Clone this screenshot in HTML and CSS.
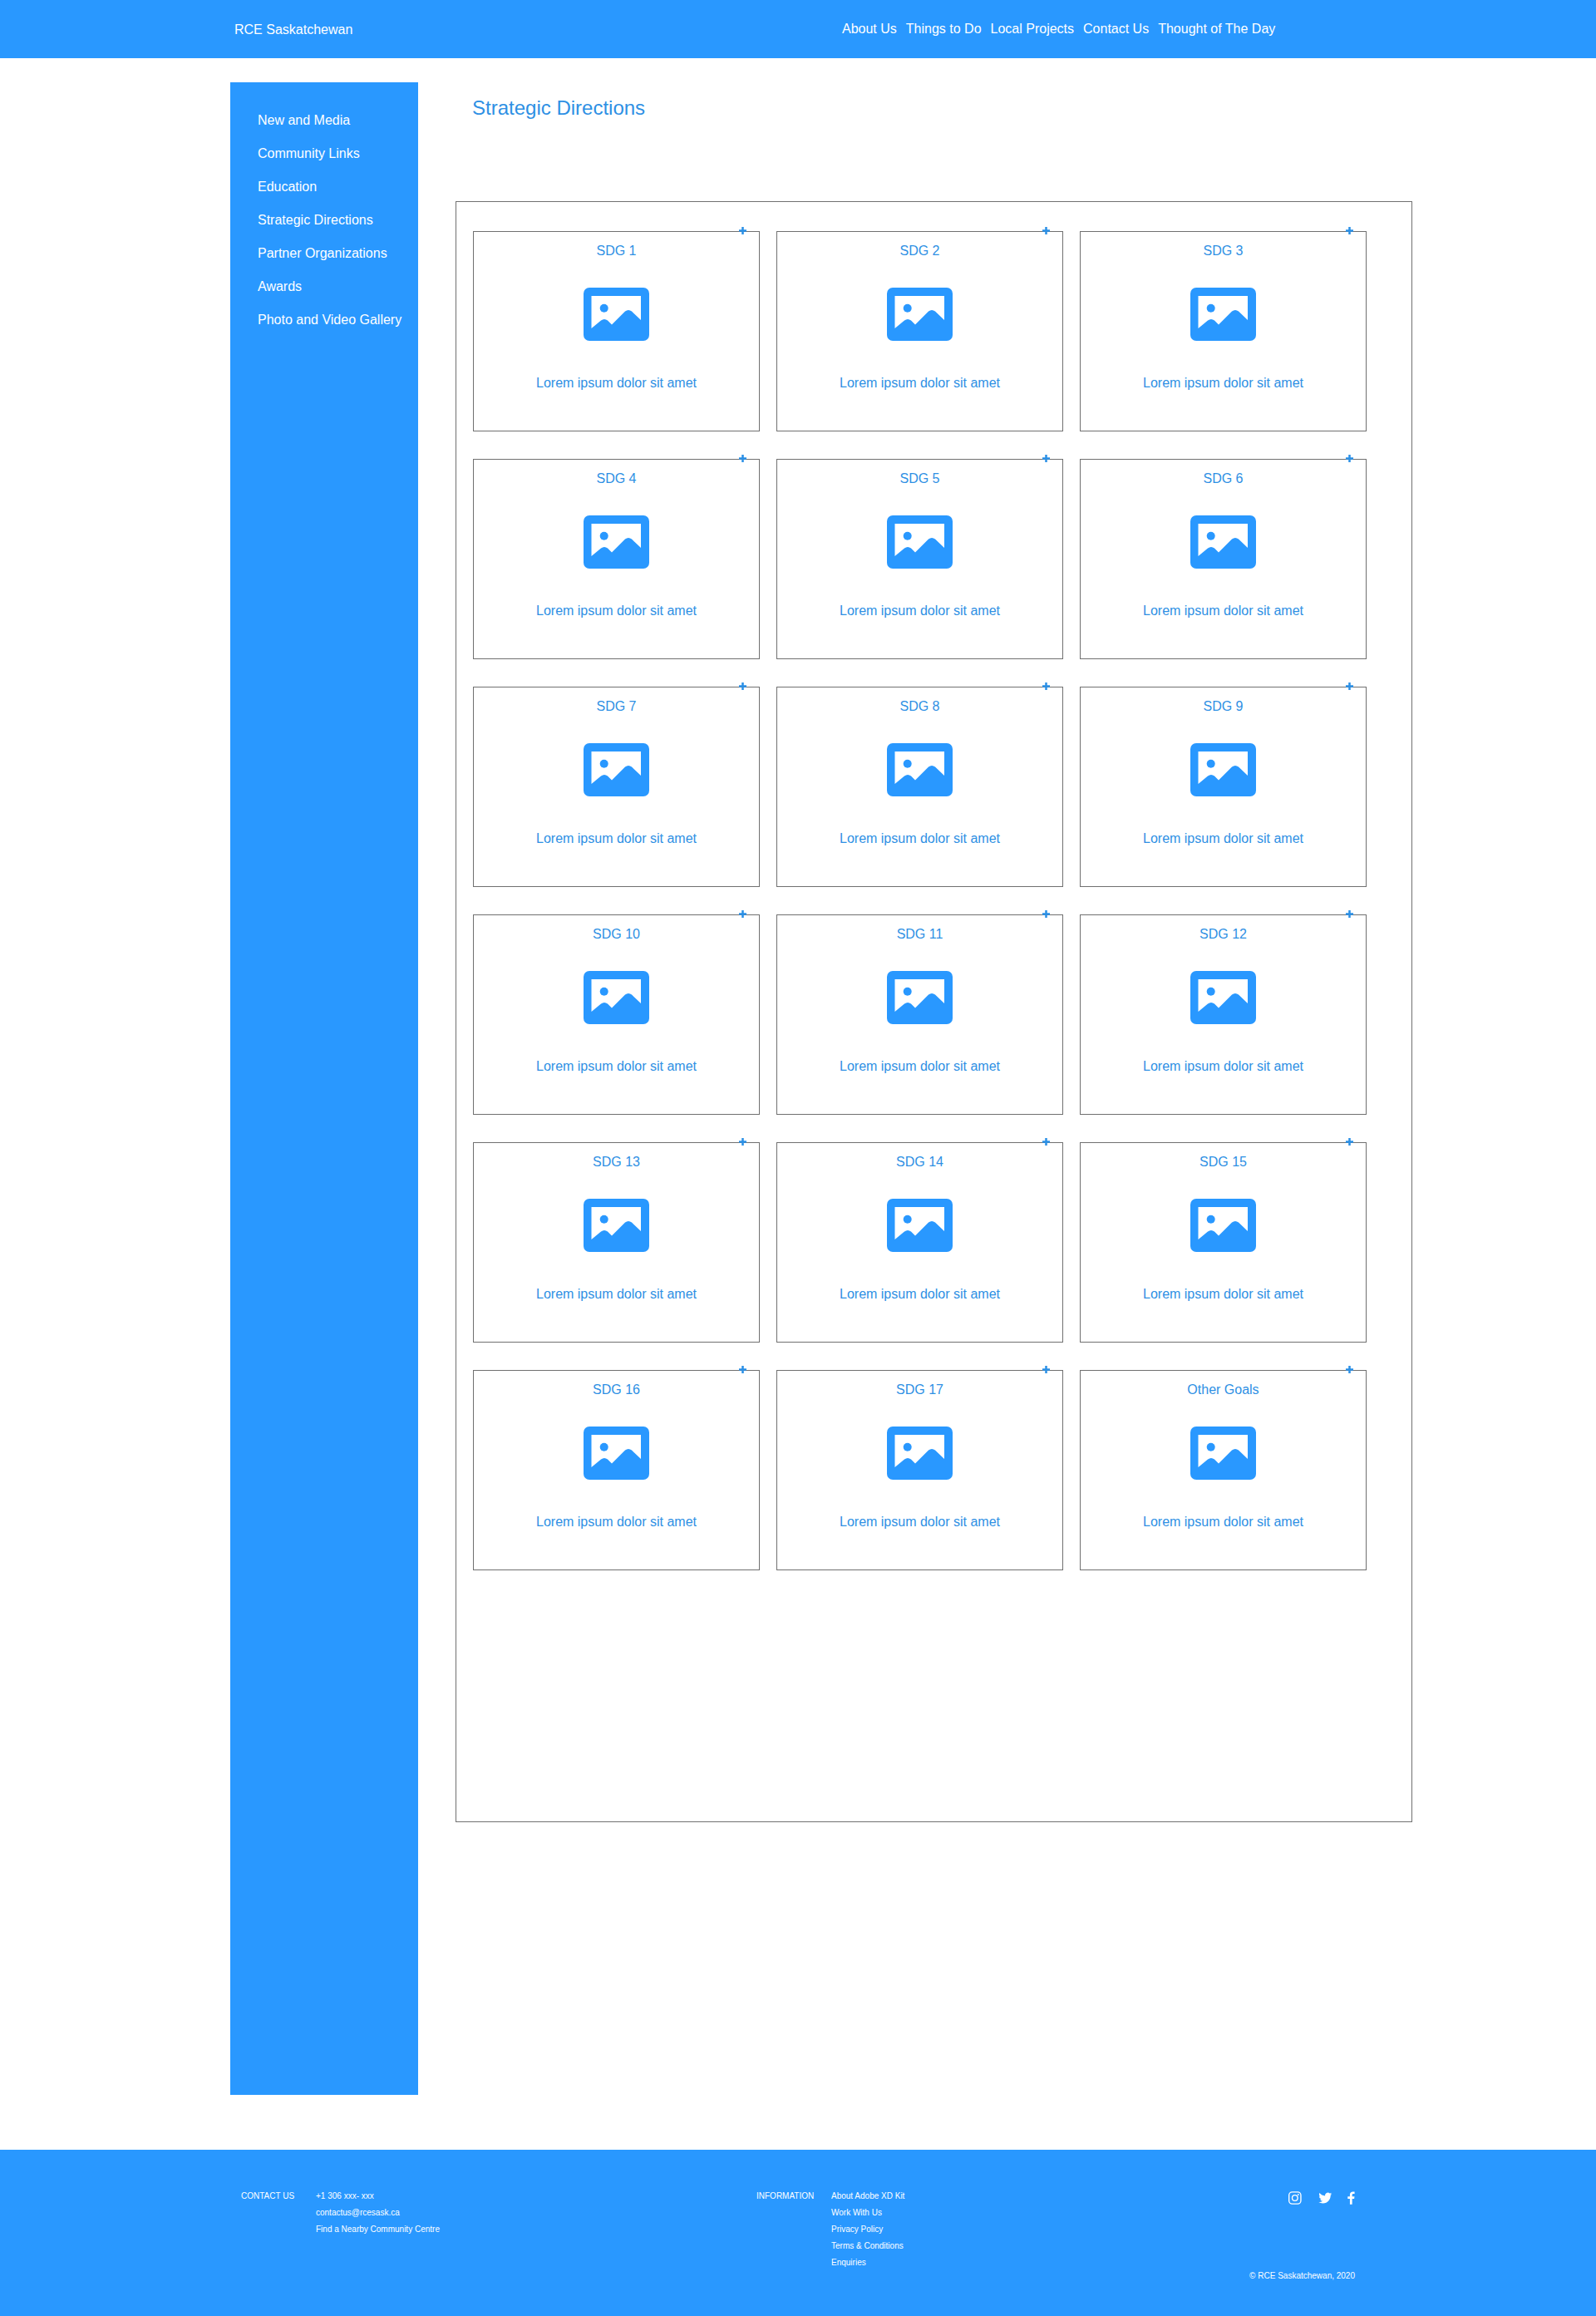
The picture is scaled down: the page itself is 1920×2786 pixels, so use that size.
FILE: index.html
```html
<!DOCTYPE html>
<html lang="en">
<head>
<meta charset="UTF-8" />
<title>RCE Saskatchewan - Strategic Directions</title>
<link rel="stylesheet" href="styles.css">
</head>
<body>
<svg class="icon-defs" aria-hidden="true">
  <symbol id="picture" viewBox="0 0 79 64">
    <rect width="79" height="64" rx="7" fill="#2998ff" />
    <path d="M9.5 10H69V39L58 28.6Q54 25.4 50 28.6L34 44.4L29 39.6Q25 36.6 21 39.6L9.5 49Z" fill="#fff" />
    <circle cx="24.7" cy="24.7" r="5" fill="#2998ff" />
  </symbol>
  <symbol id="plus" viewBox="0 0 10 10">
    <path d="M3.6 0H6.4V3.6H10V6.4H6.4V10H3.6V6.4H0V3.6H3.6Z" fill="#2b90e6" />
  </symbol>
</svg>

<header class="topbar">
  <a class="brand" href="#">RCE Saskatchewan</a>
  <nav class="topnav">
    <a href="#">About Us</a>
    <a href="#">Things to Do</a>
    <a href="#">Local Projects</a>
    <a href="#">Contact Us</a>
    <a href="#">Thought of The Day</a>
  </nav>
</header>

<div class="page">
  <aside class="sidebar">
    <a href="#">New and Media</a>
    <a href="#">Community Links</a>
    <a href="#">Education</a>
    <a href="#">Strategic Directions</a>
    <a href="#">Partner Organizations</a>
    <a href="#">Awards</a>
    <a href="#">Photo and Video Gallery</a>
  </aside>

  <main class="content">
    <h1>Strategic Directions</h1>
    <section class="goals">
      <div class="goal-grid">
        <article class="card"><svg class="plus"><use href="#plus" /></svg><h2>SDG 1</h2><svg class="picture"><use href="#picture" /></svg><p>Lorem ipsum dolor sit amet</p></article>
        <article class="card"><svg class="plus"><use href="#plus" /></svg><h2>SDG 2</h2><svg class="picture"><use href="#picture" /></svg><p>Lorem ipsum dolor sit amet</p></article>
        <article class="card"><svg class="plus"><use href="#plus" /></svg><h2>SDG 3</h2><svg class="picture"><use href="#picture" /></svg><p>Lorem ipsum dolor sit amet</p></article>
        <article class="card"><svg class="plus"><use href="#plus" /></svg><h2>SDG 4</h2><svg class="picture"><use href="#picture" /></svg><p>Lorem ipsum dolor sit amet</p></article>
        <article class="card"><svg class="plus"><use href="#plus" /></svg><h2>SDG 5</h2><svg class="picture"><use href="#picture" /></svg><p>Lorem ipsum dolor sit amet</p></article>
        <article class="card"><svg class="plus"><use href="#plus" /></svg><h2>SDG 6</h2><svg class="picture"><use href="#picture" /></svg><p>Lorem ipsum dolor sit amet</p></article>
        <article class="card"><svg class="plus"><use href="#plus" /></svg><h2>SDG 7</h2><svg class="picture"><use href="#picture" /></svg><p>Lorem ipsum dolor sit amet</p></article>
        <article class="card"><svg class="plus"><use href="#plus" /></svg><h2>SDG 8</h2><svg class="picture"><use href="#picture" /></svg><p>Lorem ipsum dolor sit amet</p></article>
        <article class="card"><svg class="plus"><use href="#plus" /></svg><h2>SDG 9</h2><svg class="picture"><use href="#picture" /></svg><p>Lorem ipsum dolor sit amet</p></article>
        <article class="card"><svg class="plus"><use href="#plus" /></svg><h2>SDG 10</h2><svg class="picture"><use href="#picture" /></svg><p>Lorem ipsum dolor sit amet</p></article>
        <article class="card"><svg class="plus"><use href="#plus" /></svg><h2>SDG 11</h2><svg class="picture"><use href="#picture" /></svg><p>Lorem ipsum dolor sit amet</p></article>
        <article class="card"><svg class="plus"><use href="#plus" /></svg><h2>SDG 12</h2><svg class="picture"><use href="#picture" /></svg><p>Lorem ipsum dolor sit amet</p></article>
        <article class="card"><svg class="plus"><use href="#plus" /></svg><h2>SDG 13</h2><svg class="picture"><use href="#picture" /></svg><p>Lorem ipsum dolor sit amet</p></article>
        <article class="card"><svg class="plus"><use href="#plus" /></svg><h2>SDG 14</h2><svg class="picture"><use href="#picture" /></svg><p>Lorem ipsum dolor sit amet</p></article>
        <article class="card"><svg class="plus"><use href="#plus" /></svg><h2>SDG 15</h2><svg class="picture"><use href="#picture" /></svg><p>Lorem ipsum dolor sit amet</p></article>
        <article class="card"><svg class="plus"><use href="#plus" /></svg><h2>SDG 16</h2><svg class="picture"><use href="#picture" /></svg><p>Lorem ipsum dolor sit amet</p></article>
        <article class="card"><svg class="plus"><use href="#plus" /></svg><h2>SDG 17</h2><svg class="picture"><use href="#picture" /></svg><p>Lorem ipsum dolor sit amet</p></article>
        <article class="card"><svg class="plus"><use href="#plus" /></svg><h2>Other Goals</h2><svg class="picture"><use href="#picture" /></svg><p>Lorem ipsum dolor sit amet</p></article>
      </div>
    </section>
  </main>
</div>

<footer class="footer">
  <div class="foot-group foot-contact">
    <span class="foot-label">CONTACT US</span>
    <div class="foot-links">
      <a href="#">+1 306 xxx- xxx</a>
      <a href="#">contactus@rcesask.ca</a>
      <a href="#">Find a Nearby Community Centre</a>
    </div>
  </div>
  <div class="foot-group foot-info">
    <span class="foot-label">INFORMATION</span>
    <div class="foot-links">
      <a href="#">About Adobe XD Kit</a>
      <a href="#">Work With Us</a>
      <a href="#">Privacy Policy</a>
      <a href="#">Terms &amp; Conditions</a>
      <a href="#">Enquiries</a>
    </div>
  </div>
  <div class="foot-side">
    <div class="social">
      <svg class="insta" viewBox="0 0 16 16" aria-label="Instagram">
        <rect x="0.7" y="0.7" width="14.6" height="14.6" rx="4" fill="none" stroke="#fff" stroke-width="1.4" />
        <circle cx="8" cy="8" r="3.4" fill="none" stroke="#fff" stroke-width="1.4" />
        <circle cx="12.1" cy="3.9" r="0.9" fill="#fff" />
      </svg>
      <svg class="twitter" viewBox="0 0 24 24" aria-label="Twitter">
        <path d="M23.953 4.57a10 10 0 01-2.825.775 4.958 4.958 0 002.163-2.723c-.951.555-2.005.959-3.127 1.184a4.92 4.92 0 00-8.384 4.482C7.69 8.095 4.067 6.13 1.64 3.162a4.822 4.822 0 00-.666 2.475c0 1.71.87 3.213 2.188 4.096a4.904 4.904 0 01-2.228-.616v.06a4.923 4.923 0 003.946 4.827 4.996 4.996 0 01-2.212.085 4.936 4.936 0 004.604 3.417 9.867 9.867 0 01-6.102 2.105c-.39 0-.779-.023-1.17-.067a13.995 13.995 0 007.557 2.209c9.053 0 13.998-7.496 13.998-13.985 0-.21 0-.42-.015-.63A9.935 9.935 0 0024 4.59z" fill="#fff" />
      </svg>
      <svg class="facebook" viewBox="0 0 9 16" aria-label="Facebook">
        <path d="M5.8 16V9H8.3L8.7 6.2H5.8V4.5C5.8 3.6 6.1 3 7.2 3H8.8V.4C8.4.3 7.6.2 6.7.2 4.5.2 3 1.5 3 4V6.2H.3V9H3V16Z" fill="#fff" />
      </svg>
    </div>
    <span class="copyright">© RCE Saskatchewan, 2020</span>
  </div>
</footer>
</body>
</html>
```

FILE: styles.css
```css
/* Reset */
* {
  box-sizing: border-box;
}
body {
  margin: 0;
  font-family: "Liberation Sans", Arial, sans-serif;
  background: #fff;
  color: #2e90e4;
}
a {
  color: #fff;
  text-decoration: none;
}
.icon-defs {
  display: none;
}

/* Top bar */
.topbar {
  height: 70px;
  background: #2998ff;
  display: flex;
  padding: 0 0 0 282px;
  font-size: 16px;
}
.brand {
  width: 731px;
  line-height: 72px;
}
.topnav {
  display: flex;
  gap: 11px;
  line-height: 70px;
}

/* Sidebar + content */
.page {
  display: flex;
  padding: 29px 221px 66px 277px;
}
.sidebar {
  width: 226px;
  height: 2421px;
  background: #2998ff;
  padding: 26px 0 0 33px;
  display: flex;
  flex-direction: column;
  font-size: 16px;
}
.sidebar a {
  line-height: 40px;
}
.content {
  margin-left: 45px;
  width: 1151px;
}
h1 {
  margin: 0;
  padding: 14px 0 0 20px;
  height: 143px;
  font-size: 24px;
  line-height: 34px;
  font-weight: 400;
}
.goals {
  height: 1950px;
  border: 1px solid #707070;
  padding: 35px 0 0 20px;
}
.goal-grid {
  display: grid;
  grid-template-columns: repeat(3, 345px);
  grid-auto-rows: 241px;
  column-gap: 20px;
  row-gap: 33px;
}
.card {
  position: relative;
  border: 1px solid #707070;
  display: flex;
  flex-direction: column;
  align-items: center;
  padding-top: 13px;
}
.card h2 {
  margin: 0;
  font-size: 16px;
  line-height: 20px;
  font-weight: 400;
}
.picture {
  width: 79px;
  height: 64px;
  margin-top: 34px;
}
.card p {
  margin: 41px 0 0;
  font-size: 16px;
  line-height: 20px;
}
.plus {
  position: absolute;
  top: -6px;
  right: 15px;
  width: 9px;
  height: 9px;
}

/* Footer */
.footer {
  height: 200px;
  background: #2998ff;
  display: flex;
  padding: 50px 0 0 290px;
  font-size: 10px;
  color: #fff;
}
.foot-group {
  display: flex;
}
.foot-label {
  line-height: 12px;
}
.foot-contact {
  width: 620px;
}
.foot-contact .foot-label {
  width: 90px;
}
.foot-info {
  width: 640px;
}
.foot-info .foot-label {
  width: 90px;
}
.foot-links {
  display: flex;
  flex-direction: column;
  gap: 8px;
  line-height: 12px;
}
.foot-side {
  width: 80px;
  position: relative;
}
.social {
  display: flex;
  align-items: flex-start;
}
.social svg {
  display: block;
  height: 16px;
}
.insta {
  width: 16px;
  margin-right: 20px;
}
.twitter {
  width: 17px;
  margin-right: 19px;
}
.facebook {
  width: 9px;
}
.copyright {
  position: absolute;
  right: 0;
  top: 96px;
  white-space: nowrap;
  line-height: 12px;
}
```
